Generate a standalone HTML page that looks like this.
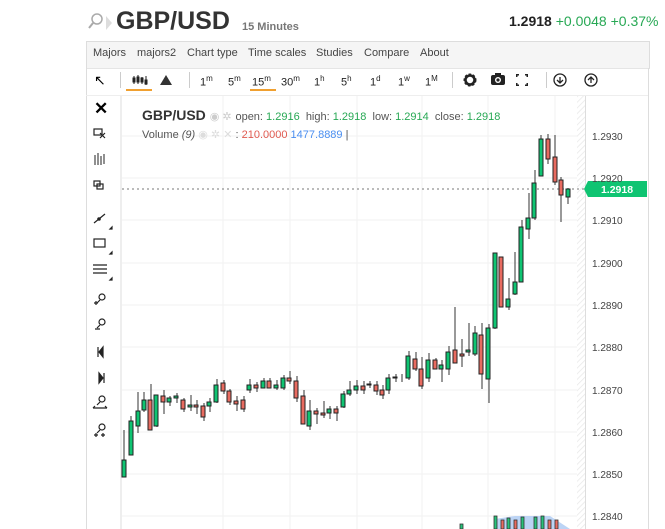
<!DOCTYPE html><html><head><style>
body{margin:0;width:665px;height:529px;overflow:hidden;background:#fff;font-family:"Liberation Sans",sans-serif;position:relative}
.a{position:absolute;white-space:nowrap}
.g{color:#27a854}
sup{font-size:8px}
.m{position:absolute;top:47px;font-size:11px;color:#444}
</style></head><body>
<svg class="a" style="left:88px;top:12px" width="16" height="18"><circle cx="9" cy="7" r="5" fill="none" stroke="#aaa" stroke-width="1.5"/><line x1="5" y1="11" x2="1" y2="16" stroke="#aaa" stroke-width="2"/></svg>
<div class="a" style="left:106px;top:16px;width:0;height:0;border-left:6px solid #ddd;border-top:7px solid transparent;border-bottom:7px solid transparent"></div>
<div class="a" style="left:116px;top:7px;font-size:25px;font-weight:bold;color:#333">GBP/USD</div>
<div class="a" style="left:242px;top:21px;font-size:11px;font-weight:bold;color:#777">15 Minutes</div>
<div class="a" style="left:509px;top:13px;font-size:14px;color:#222"><b>1.2918</b> <span class="g">+0.0048 +0.37%</span></div>
<div class="a" style="left:86px;top:41px;width:562px;height:26px;background:#f5f5f5;border:1px solid #ddd;border-bottom:1px solid #e5e5e5"></div>
<span class="m" style="left:93px">Majors</span><span class="m" style="left:137px">majors2</span><span class="m" style="left:187px">Chart type</span><span class="m" style="left:248px">Time scales</span><span class="m" style="left:316px">Studies</span><span class="m" style="left:364px">Compare</span><span class="m" style="left:420px">About</span>
<div class="a" style="left:86px;top:68px;width:1px;height:461px;background:#ddd"></div>
<div class="a" style="left:648px;top:68px;width:1px;height:461px;background:#ddd"></div>
<div class="a" style="left:86px;top:95px;width:562px;height:1px;background:#eee"></div>
<div class="a" style="left:94px;top:72px;font-size:14px">&#8598;</div>
<div class="a" style="left:126px;top:89px;width:26px;height:2px;background:#f0a030"></div>
<div class="a" style="left:250px;top:89px;width:26px;height:2px;background:#f0a030"></div>
<svg class="a" style="left:132px;top:73px" width="18" height="14" stroke="#222"><path d="M2 3v8M6 2v9M10 4v7M14 3v9" stroke-width="1"/><rect x="1" y="5" width="2" height="4" fill="#222"/><rect x="5" y="4" width="2" height="5" fill="#222"/><rect x="9" y="5" width="2" height="4" fill="#222"/><rect x="13" y="7" width="2" height="4" fill="#222"/></svg>
<div class="a" style="left:160px;top:75px;width:0;height:0;border-left:6px solid transparent;border-right:6px solid transparent;border-bottom:10px solid #333"></div>
<div class="a" style="left:120px;top:72px;width:1px;height:16px;background:#ccc"></div>
<div class="a" style="left:189px;top:72px;width:1px;height:16px;background:#ccc"></div>
<div class="a" style="left:452px;top:72px;width:1px;height:16px;background:#ccc"></div>
<div class="a" style="left:546px;top:72px;width:1px;height:16px;background:#ccc"></div>
<div class="a" style="left:0;top:74px;font-size:11px;color:#222">
<span class="a" style="left:200px">1<sup>m</sup></span><span class="a" style="left:228px">5<sup>m</sup></span><span class="a" style="left:252px">15<sup>m</sup></span><span class="a" style="left:281px">30<sup>m</sup></span><span class="a" style="left:314px">1<sup>h</sup></span><span class="a" style="left:341px">5<sup>h</sup></span><span class="a" style="left:370px">1<sup>d</sup></span><span class="a" style="left:398px">1<sup>w</sup></span><span class="a" style="left:425px">1<sup>M</sup></span></div>
<svg class="a" style="left:462px;top:72px" width="140" height="16">
<circle cx="8" cy="8" r="5" fill="none" stroke="#222" stroke-width="3" stroke-dasharray="2.2 1.5"/><circle cx="8" cy="8" r="4.5" fill="none" stroke="#222" stroke-width="2.5"/>
<rect x="29" y="3" width="14" height="10" rx="2" fill="#222"/><rect x="33" y="1" width="6" height="3" fill="#222"/><circle cx="36" cy="8" r="3" fill="#fff"/><circle cx="36" cy="8" r="1.6" fill="#222"/>
<path d="M54 2h3v1.5h-1.5v1.5h-1.5zM66 2h-3v1.5h1.5v1.5h1.5zM54 14h3v-1.5h-1.5v-1.5h-1.5zM66 14h-3v-1.5h1.5v-1.5h1.5z" fill="#222"/>
<circle cx="98" cy="8" r="6" fill="none" stroke="#222" stroke-width="1.3"/><path d="M98 5v6M95 8l3 3 3-3" stroke="#222" fill="none" stroke-width="1.3"/>
<circle cx="129" cy="8" r="6" fill="none" stroke="#222" stroke-width="1.3"/><path d="M129 11v-6M126 8l3-3 3 3" stroke="#222" fill="none" stroke-width="1.3"/>
</svg>
<div class="a" style="left:94px;top:99px;font-size:17px;font-weight:bold">✕</div>
<svg class="a" style="left:90px;top:125px" width="30" height="330" fill="none" stroke="#222" stroke-width="1.2">
<rect x="4" y="4" width="8" height="6"/><path d="M10 8l5 5M15 8l-5 5"/>
<path d="M5 30v10M8 28v12M11 31v9M14 29v10" stroke-width="1"/>
<rect x="4" y="56" width="6" height="5"/><rect x="7" y="59" width="6" height="5"/>
<path d="M4 98l11-9"/><circle cx="9" cy="94" r="1.2" fill="#222"/><path d="M22 104l-2 0 2-2z" fill="#222"/>
<rect x="4" y="114" width="11" height="8"/><path d="M22 129l-2 0 2-2z" fill="#222"/>
<path d="M3 140h14M3 144h14M3 148h14"/><path d="M22 155l-2 0 2-2z" fill="#222"/>
<circle cx="12" cy="172" r="3"/><path d="M10 175l-3 3M4 178h4M6 176v4"/>
<circle cx="12" cy="197" r="3"/><path d="M10 200l-3 3M5 204h5"/>
<path d="M13 222v10l-4-5z" fill="#222"/><path d="M8 222v10"/>
<path d="M9 248v10l4-5z" fill="#222"/><path d="M14 248v10"/>
<circle cx="12" cy="274" r="3"/><path d="M10 277l-3 3M3 283h14M3 283l2-2M17 283l-2-2"/>
<circle cx="12" cy="302" r="3"/><path d="M10 305l-3 3M4 310h4M6 308v4M11 310h4M13 308v4"/>
</svg>
<svg class="a" style="left:0;top:0" width="665" height="529">
<defs><pattern id="h" width="4" height="4" patternUnits="userSpaceOnUse" patternTransform="rotate(45)"><line x1="0" y1="0" x2="0" y2="4" stroke="#e8e8e8" stroke-width="1.5"/></pattern></defs>
<rect x="577" y="96" width="8" height="433" fill="url(#h)"/>
<line x1="121" y1="96" x2="121" y2="529" stroke="#ddd"/>
<line x1="585.5" y1="96" x2="585.5" y2="529" stroke="#ddd"/>
<g stroke="#f2f2f2">
<line x1="223" y1="96" x2="223" y2="529"/><line x1="290" y1="96" x2="290" y2="529"/><line x1="357" y1="96" x2="357" y2="529"/><line x1="422" y1="96" x2="422" y2="529"/><line x1="488" y1="96" x2="488" y2="529"/><line x1="555" y1="96" x2="555" y2="529"/>
<line x1="122" y1="136" x2="577" y2="136"/><line x1="122" y1="178" x2="577" y2="178"/><line x1="122" y1="220" x2="577" y2="220"/><line x1="122" y1="263" x2="577" y2="263"/><line x1="122" y1="305" x2="577" y2="305"/><line x1="122" y1="347" x2="577" y2="347"/><line x1="122" y1="390" x2="577" y2="390"/><line x1="122" y1="432" x2="577" y2="432"/><line x1="122" y1="474" x2="577" y2="474"/><line x1="122" y1="516" x2="577" y2="516"/>
</g>
<line x1="122" y1="189" x2="588" y2="189" stroke="#777" stroke-dasharray="2 3"/>
<path d="M588 181h59v16h-59l-4-8z" fill="#0fc472"/>
<text x="617" y="193" font-size="10.5" font-weight="bold" fill="#fff" text-anchor="middle" font-family="Liberation Sans">1.2918</text>
<g font-size="10" fill="#444" font-family="Liberation Sans">
<text x="592" y="140">1.2930</text><text x="592" y="182">1.2920</text><text x="592" y="224">1.2910</text><text x="592" y="267">1.2900</text><text x="592" y="309">1.2890</text><text x="592" y="351">1.2880</text><text x="592" y="394">1.2870</text><text x="592" y="436">1.2860</text><text x="592" y="478">1.2850</text><text x="592" y="520">1.2840</text>
</g>
<path d="M495 529v-10 l20-3h35l20 13z" fill="#bcd4f5"/>
<g fill="#27c27a" stroke="#333" stroke-width=".8">
<rect x="494" y="516" width="3" height="13"/><rect x="507" y="518" width="3" height="11"/><rect x="521" y="517" width="3" height="12"/><rect x="534" y="517" width="3" height="12"/><rect x="541" y="516" width="3" height="13"/><rect x="460" y="524" width="3" height="5"/>
</g>
<g fill="#e86b60" stroke="#333" stroke-width=".8"><rect x="501" y="520" width="3" height="9"/><rect x="514" y="520" width="3" height="9"/><rect x="548" y="520" width="3" height="9"/><rect x="555" y="520" width="3" height="9"/></g>
<g stroke="#333" stroke-width="1">
<path d="M124 430v47M131 416v36M138 392v41M144 392v20M151 384v32M157 395v32M164 390v24M170 396v10M177 393v10M184 398v14M191 395v16M197 400v14M204 403v18M210 398v14M217 379v24M224 380v14M230 389v16M237 396v15M244 396v16M250 379v14M257 382v10M264 378v10M270 378v10M277 380v10M284 375v15M290 371v13M297 376v26M304 390v33M310 400v30M317 408v16M324 401v17M330 406v13M337 406v15M344 391v17M350 381v15M357 380v14M364 381v13M370 381v7M377 381v14M383 385v14M389 374v20M396 374v8M402 374v8M409 351v29M416 352v19M422 357v32M429 353v29M436 358v11M442 360v22M449 346v29M455 307v47M462 339v28M469 323v33M475 326v30M482 323v66M489 324v79M495 253v76M502 257v36M509 278v32M515 252v43M522 220v62M529 193v46M535 170v50M541 135v40M548 134v30M555 135v50M561 177v45M568 188v16"/>
</g>
<g fill="#0fc472" stroke="#222" stroke-width="1">
<rect x="122" y="460" width="4" height="17"/><rect x="129" y="421" width="4" height="34"/><rect x="136" y="411" width="4" height="15"/><rect x="142" y="400" width="4" height="10"/><rect x="154" y="395" width="4" height="31"/><rect x="167" y="398" width="4" height="4"/><rect x="174" y="396" width="4" height="2"/><rect x="188" y="405" width="4" height="2"/><rect x="207" y="402" width="4" height="4"/><rect x="214" y="385" width="4" height="17"/><rect x="247" y="385" width="4" height="5"/><rect x="261" y="381" width="4" height="7"/><rect x="274" y="385" width="4" height="3"/><rect x="281" y="378" width="4" height="10"/><rect x="307" y="411" width="4" height="15"/><rect x="327" y="409" width="4" height="4"/><rect x="341" y="394" width="4" height="13"/><rect x="347" y="390" width="4" height="4"/><rect x="354" y="386" width="4" height="4"/><rect x="386" y="378" width="4" height="12"/><rect x="393" y="377" width="4" height="1"/><rect x="406" y="356" width="4" height="22"/><rect x="426" y="360" width="4" height="18"/><rect x="439" y="365" width="4" height="4"/><rect x="446" y="352" width="4" height="17"/><rect x="466" y="350" width="4" height="2"/><rect x="473" y="333" width="4" height="21"/><rect x="486" y="328" width="4" height="51"/><rect x="493" y="253" width="4" height="75"/><rect x="506" y="299" width="4" height="8"/><rect x="513" y="282" width="4" height="12"/><rect x="519" y="227" width="4" height="55"/><rect x="526" y="218" width="4" height="11"/><rect x="532" y="183" width="4" height="35"/><rect x="539" y="139" width="4" height="37"/><rect x="566" y="189" width="4" height="8"/>
</g>
<g fill="#e86b60" stroke="#222" stroke-width="1">
<rect x="148" y="400" width="4" height="30"/><rect x="161" y="396" width="4" height="6"/><rect x="181" y="400" width="4" height="9"/><rect x="194" y="405" width="4" height="2"/><rect x="201" y="406" width="4" height="11"/><rect x="221" y="383" width="4" height="8"/><rect x="227" y="391" width="4" height="11"/><rect x="234" y="401" width="4" height="3"/><rect x="241" y="400" width="4" height="9"/><rect x="254" y="385" width="4" height="3"/><rect x="267" y="381" width="4" height="7"/><rect x="287" y="378" width="4" height="3"/><rect x="294" y="381" width="4" height="17"/><rect x="301" y="396" width="4" height="28"/><rect x="314" y="411" width="4" height="3"/><rect x="321" y="413" width="4" height="2"/><rect x="334" y="409" width="4" height="4"/><rect x="361" y="386" width="4" height="4"/><rect x="367" y="384" width="4" height="1"/><rect x="374" y="385" width="4" height="6"/><rect x="380" y="390" width="4" height="5"/><rect x="413" y="359" width="4" height="10"/><rect x="419" y="369" width="4" height="17"/><rect x="433" y="360" width="4" height="9"/><rect x="453" y="350" width="4" height="13"/><rect x="460" y="354" width="4" height="2"/><rect x="479" y="335" width="4" height="39"/><rect x="499" y="257" width="4" height="50"/><rect x="546" y="139" width="4" height="20"/><rect x="553" y="157" width="4" height="25"/><rect x="559" y="180" width="4" height="15"/>
</g>
</svg>
<div class="a" style="left:142px;top:107px;font-size:14px;font-weight:bold;color:#333">GBP/USD <span style="font-size:11px;font-weight:normal;color:#ccc">◉ ✲</span> <span style="font-size:11px;font-weight:normal;color:#555">open: <span class="g">1.2916</span>&nbsp; high: <span class="g">1.2918</span>&nbsp; low: <span class="g">1.2914</span>&nbsp; close: <span class="g">1.2918</span></span></div>
<div class="a" style="left:142px;top:128px;font-size:11px;color:#555">Volume <i>(9)</i> <span style="color:#ddd">◉ ✲ ✕</span> : <span style="color:#e05a50">210.0000</span> <span style="color:#4a8ef0">1477.8889</span> |</div>
</body></html>
